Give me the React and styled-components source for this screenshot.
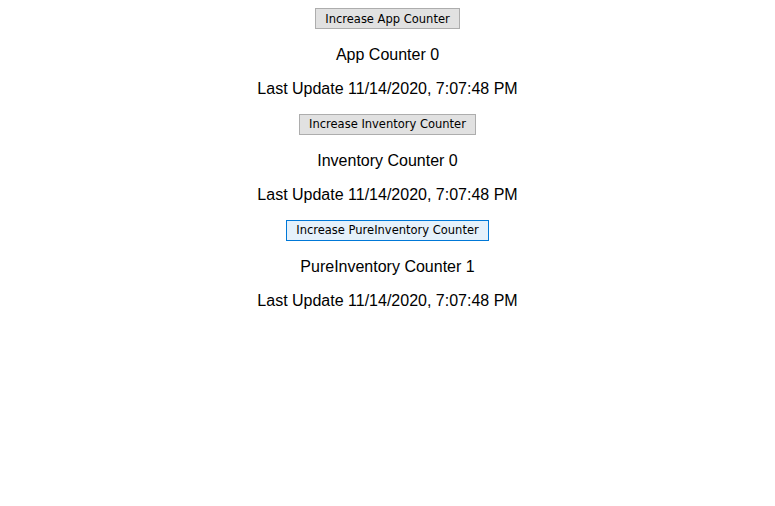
import { useState } from 'react';
import styled, { createGlobalStyle } from 'styled-components';

const GlobalStyle = createGlobalStyle`
  body {
    margin: 8px;
    background: #fff;
    font-family: "Liberation Sans", Arial, sans-serif;
    font-size: 16px;
    color: #000;
  }
`;

const stamp = '11/14/2020, 7:07:48 PM';

function CounterBlock({ label, count, active, onIncrease }) {
  return (
    <Block>
      <IncreaseButton $active={active} onClick={onIncrease}>
        Increase {label} Counter
      </IncreaseButton>
      <Line>
        {label} Counter {count}
      </Line>
      <Line>Last Update {stamp}</Line>
    </Block>
  );
}

function App() {
  const [app, setApp] = useState(0);
  const [inventory, setInventory] = useState(0);
  const [pure, setPure] = useState(1);

  return (
    <Page>
      <GlobalStyle />
      <CounterBlock label="App" count={app} onIncrease={() => setApp(app + 1)} />
      <CounterBlock
        label="Inventory"
        count={inventory}
        onIncrease={() => setInventory(inventory + 1)}
      />
      <CounterBlock
        label="PureInventory"
        count={pure}
        active
        onIncrease={() => setPure(pure + 1)}
      />
    </Page>
  );
}

const Page = styled.div`
  text-align: center;
`;

const Block = styled.div`
  display: flex;
  flex-direction: column;
  align-items: center;
`;

const IncreaseButton = styled.button`
  box-sizing: border-box;
  height: 21px;
  padding: 0 9px;
  font-family: "DejaVu Sans", Tahoma, sans-serif;
  font-size: 11.5px;
  color: #000;
  background: ${(p) => (p.$active ? '#e5f1fb' : '#e1e1e1')};
  border: 1px solid ${(p) => (p.$active ? '#0078d7' : '#adadad')};
  border-radius: 0;
  cursor: pointer;
`;

const Line = styled.p`
  margin: 16px 0 0;
  line-height: 18.4px;

  &:first-of-type {
    margin-top: 17px;
  }

  &:last-child {
    margin-bottom: 15px;
  }
`;

export default App;
